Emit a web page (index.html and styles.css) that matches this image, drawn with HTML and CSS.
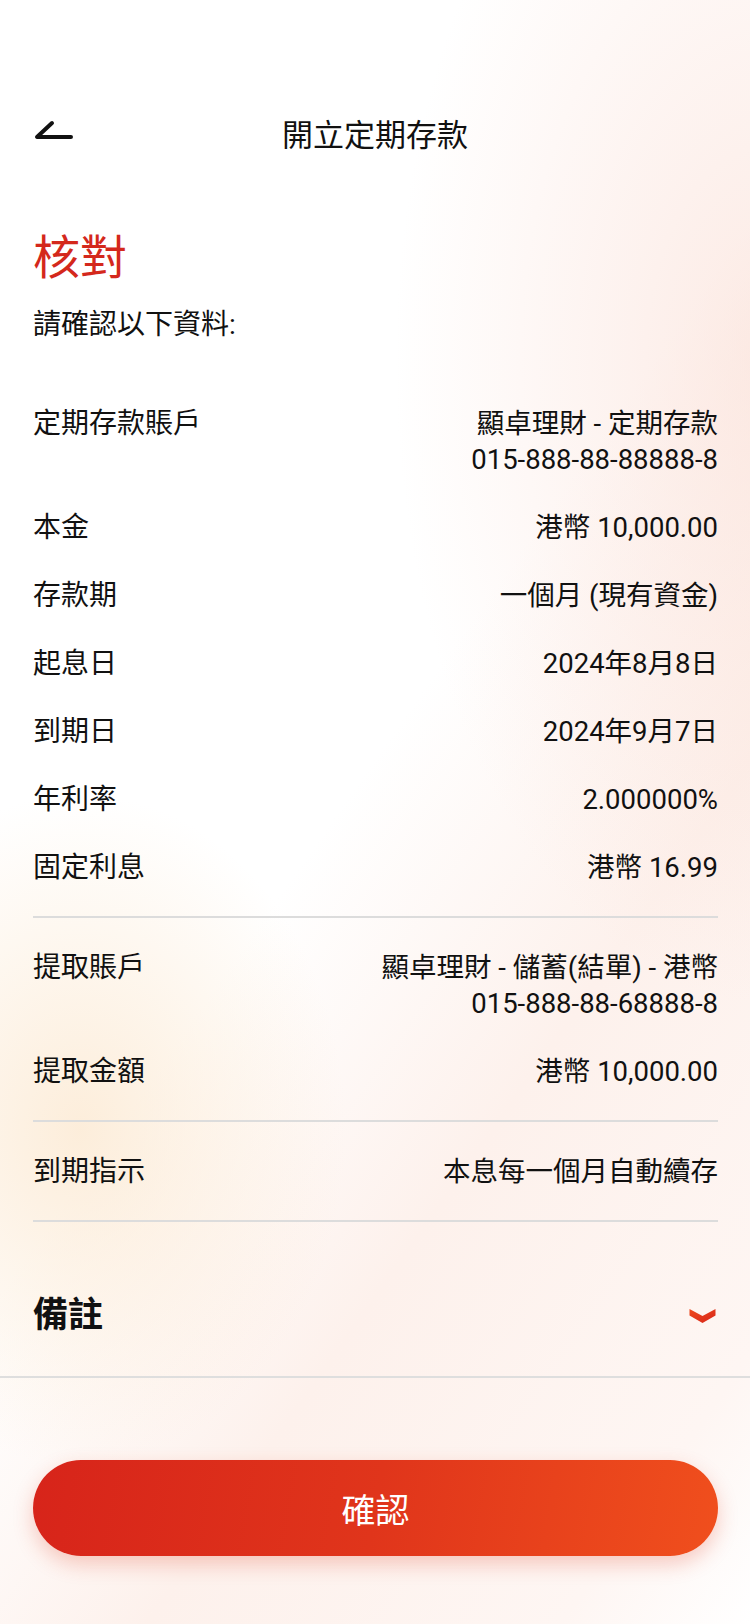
FILE: index.html
```html
<!DOCTYPE html>
<html lang="zh-Hant">
<head>
  <meta charset="UTF-8">
  <meta name="viewport" content="width=device-width, initial-scale=1.0">
  <title>開立定期存款</title>
  <link rel="stylesheet" href="styles.css">
</head>
<body>
  <div class="page">
    <!-- 頂部 -->
    <header class="topbar">
      <button class="back" aria-label="返回">
        <svg width="40" height="24" viewBox="0 0 40 24">
          <path d="M18 3 L3 17 L37 17" fill="none" stroke="#111" stroke-width="4" stroke-linecap="round" stroke-linejoin="round"/>
        </svg>
      </button>
      <div class="topbar-title">開立定期存款</div>
    </header>

    <main class="content">
      <h1 class="heading">核對</h1>
      <p class="intro">請確認以下資料:</p>

      <!-- 定期存款資料 -->
      <section class="group first">
        <div class="row">
          <div class="label">定期存款賬戶</div>
          <div class="value">顯卓理財 - 定期存款<br>015-888-88-88888-8</div>
        </div>
        <div class="row">
          <div class="label">本金</div>
          <div class="value">港幣 10,000.00</div>
        </div>
        <div class="row">
          <div class="label">存款期</div>
          <div class="value">一個月 (現有資金)</div>
        </div>
        <div class="row">
          <div class="label">起息日</div>
          <div class="value">2024年8月8日</div>
        </div>
        <div class="row">
          <div class="label">到期日</div>
          <div class="value">2024年9月7日</div>
        </div>
        <div class="row">
          <div class="label">年利率</div>
          <div class="value">2.000000%</div>
        </div>
        <div class="row">
          <div class="label">固定利息</div>
          <div class="value">港幣 16.99</div>
        </div>
      </section>

      <!-- 提取 -->
      <section class="group">
        <div class="row">
          <div class="label">提取賬戶</div>
          <div class="value">顯卓理財 - 儲蓄(結單) - 港幣<br>015-888-88-68888-8</div>
        </div>
        <div class="row">
          <div class="label">提取金額</div>
          <div class="value">港幣 10,000.00</div>
        </div>
      </section>

      <!-- 到期指示 -->
      <section class="group">
        <div class="row">
          <div class="label">到期指示</div>
          <div class="value">本息每一個月自動續存</div>
        </div>
      </section>
    </main>

    <!-- 備註 -->
    <div class="remarks">
      <div class="remarks-title">備註</div>
      <svg class="chevron" width="27" height="14" viewBox="0 0 26 14">
        <defs>
          <linearGradient id="chev" x1="0" y1="0" x2="1" y2="1">
            <stop offset="0" stop-color="#ee4a1c"/>
            <stop offset="1" stop-color="#d8261b"/>
          </linearGradient>
        </defs>
        <path d="M0 0 L13 7 L26 0 L26 6.5 L13 14 L0 6.5 Z" fill="url(#chev)"/>
      </svg>
    </div>

    <div class="actions">
      <button class="confirm">確認</button>
    </div>
  </div>
</body>
</html>
```

FILE: styles.css
```css
html, body {
  margin: 0;
  padding: 0;
}
body {
  font-family: Roboto, "Noto Sans CJK TC", sans-serif;
  color: #111;
  background-color: #fff;
}
.page {
  min-height: 1624px;
  background:
    radial-gradient(ellipse 380px 480px at 80px 1130px, rgba(252, 234, 212, 0.85), rgba(255, 255, 255, 0) 70%),
    radial-gradient(ellipse 500px 860px at 770px 360px, rgba(250, 220, 210, 0.6), rgba(255, 255, 255, 0) 75%),
    linear-gradient(125deg, #fff 48%, #fdf1ec 68%, #fef6f3 90%, #fff 100%);
}
.topbar {
  position: relative;
  height: 80px;
  padding-top: 96px;
  display: flex;
  align-items: center;
  justify-content: center;
}
.back {
  position: absolute;
  left: 34px;
  top: 120px;
  border: none;
  background: none;
  padding: 0;
  cursor: pointer;
}
.topbar-title {
  font-size: 31px;
  line-height: 40px;
}
.content {
  padding: 0 32px 0 33px;
}
.heading {
  margin: 52px 0 0;
  font-size: 47px;
  line-height: 60px;
  font-weight: 400;
  color: #d4281c;
}
.intro {
  margin: 17px 0 0;
  font-size: 28px;
  line-height: 40px;
}
.group {
  padding: 16px 0 14px;
  border-bottom: 2px solid #dcdcdc;
}
.group.first {
  margin-top: 29px;
}
.row {
  display: flex;
  justify-content: space-between;
  align-items: flex-start;
  padding: 16px 0;
  font-size: 28px;
  line-height: 36px;
}
.label {
  flex-shrink: 0;
}
.value {
  text-align: right;
  font-size: 27.5px;
}
.remarks {
  display: flex;
  align-items: center;
  justify-content: space-between;
  padding: 74px 34px 40px 33px;
  border-bottom: 2px solid #dedede;
}
.remarks-title {
  font-size: 35px;
  line-height: 40px;
  font-weight: 700;
}
.actions {
  padding: 82px 32px 0 33px;
}
.confirm {
  display: block;
  width: 100%;
  height: 96px;
  border: none;
  border-radius: 48px;
  background: linear-gradient(100deg, #d7241a 0%, #e0351b 50%, #f04f1d 100%);
  box-shadow: 0 8px 20px rgba(225, 60, 30, 0.25);
  color: #fff;
  font-family: Roboto, "Noto Sans CJK TC", sans-serif;
  font-size: 34px;
  cursor: pointer;
}
```
